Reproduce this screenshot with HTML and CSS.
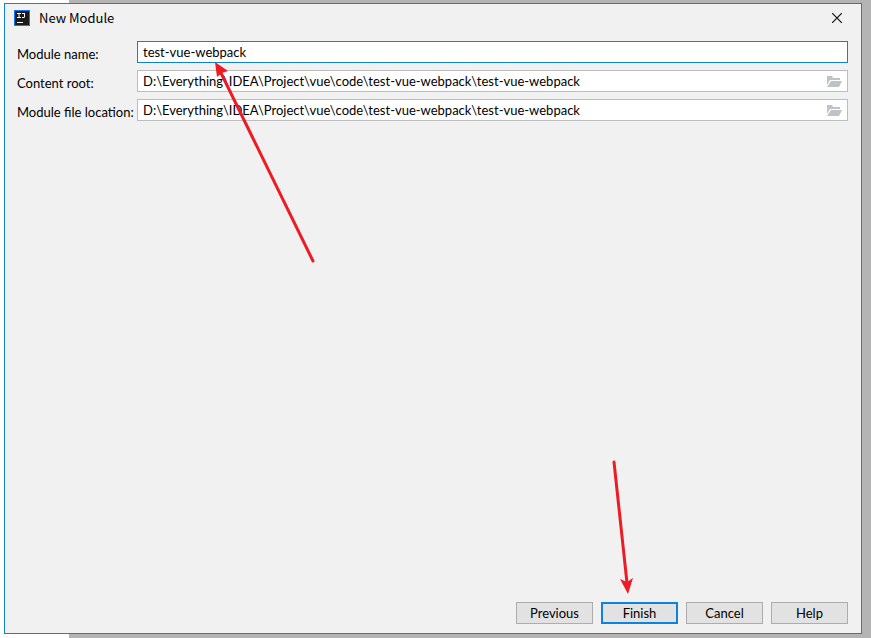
FILE: index.html
```html
<!DOCTYPE html>
<html lang="en">
<head>
    <meta charset="UTF-8">
    <meta name="viewport" content="width=device-width, initial-scale=1.0">
    <title>New Module</title>
    <link rel="stylesheet" href="styles.css">
</head>
<body>
    <form class="dialog">
        <header class="titlebar">
            <svg class="logo" width="16" height="16" viewBox="0 0 16 16" aria-hidden="true">
                <rect width="16" height="16" fill="#087cfa"/>
                <rect x="1" y="1" width="14" height="14" fill="#1b1b1b"/>
                <path d="M3 3.500h4M5 3v5M3 7.500h4M8 3.500h3M10.500 3v4q0 .5-.5.5H8M3 12.500h6" fill="none" stroke="#fff"/>
            </svg>
            <h1>New Module</h1>
            <button type="button" class="close" aria-label="Close">
                <svg width="10" height="10" viewBox="0 0 10 10"><path d="M0 0l10 10M10 0L0 10" stroke="#111" stroke-width="1.2"/></svg>
            </button>
        </header>

        <main class="fields">
            <label for="name">Module name:</label>
            <div class="field active">
                <input id="name" type="text" value="test-vue-webpack">
            </div>

            <label for="root">Content root:</label>
            <div class="field">
                <input id="root" type="text" value="D:\Everything\IDEA\Project\vue\code\test-vue-webpack\test-vue-webpack">
                <button type="button" class="browse" aria-label="Browse content root">
                    <svg width="15" height="11" viewBox="0 0 15 11"><path d="M0 0h5l1 2h7v2H3L0 9z M4 5h11l-3 6H0z" fill="#bfc3c7"/></svg>
                </button>
            </div>

            <label for="location">Module file location:</label>
            <div class="field">
                <input id="location" type="text" value="D:\Everything\IDEA\Project\vue\code\test-vue-webpack\test-vue-webpack">
                <button type="button" class="browse" aria-label="Browse module file location">
                    <svg width="15" height="11" viewBox="0 0 15 11"><path d="M0 0h5l1 2h7v2H3L0 9z M4 5h11l-3 6H0z" fill="#bfc3c7"/></svg>
                </button>
            </div>

            <svg class="arrow arrow-name" width="104" height="204" viewBox="0 0 104 204" aria-hidden="true">
                <path d="M8 12L100 200" stroke="#ed1c24" stroke-width="3" stroke-linecap="round"/>
                <path d="M2 1L15 10L9 12L4 16z" fill="#ed1c24"/>
            </svg>
        </main>

        <footer class="buttons">
            <button type="button">Previous</button>
            <div class="primary">
                <button type="submit">Finish</button>
                <svg class="arrow arrow-finish" width="24" height="136" viewBox="0 0 24 136" aria-hidden="true">
                    <path d="M4 3L17 124" stroke="#ed1c24" stroke-width="3" stroke-linecap="round"/>
                    <path d="M18 135L10 120L17 123L23 119z" fill="#ed1c24"/>
                </svg>
            </div>
            <button type="button">Cancel</button>
            <button type="button">Help</button>
        </footer>
    </form>
</body>
</html>
```

FILE: styles.css
```css
* {
    box-sizing: border-box;
}
body {
    display: flex;
    min-height: 100vh;
    margin: 0;
    padding: 3px 9px 4px 4px;
    background: linear-gradient(to right, #fff 69px, #b4b4b4 69px);
    color: #000;
    font: 13px/18px Lato, "Noto Sans", sans-serif;
}
.dialog {
    display: flex;
    flex: 1;
    flex-direction: column;
    border: 1px solid #1283da;
    background: #f1f1f1;
}
.titlebar {
    display: flex;
    align-items: center;
    height: 28px;
    padding: 0 19px 0 9px;
}
h1 {
    flex: 1;
    margin: 0 0 0 9px;
    font: 13px/18px "Noto Sans CJK SC", "Noto Sans", sans-serif;
}
button,
input {
    color: inherit;
    font: inherit;
}
.close,
.browse {
    display: flex;
    padding: 0;
    border: 0;
    background: none;
}
.browse {
    padding-top: 1px;
}
.fields {
    position: relative;
    display: grid;
    flex: 1;
    grid-template-columns: 120px 1fr;
    align-content: start;
    row-gap: 7px;
    padding: 9px 13px 0 12px;
}
label {
    height: 22px;
    padding-top: 4px;
    white-space: nowrap;
}
.field {
    display: flex;
    align-items: center;
    height: 22px;
    padding: 0 5px;
    border: 1px solid #bdbdbd;
    background: #fff;
}
.field.active {
    border-color: #0f82d8;
}
.field input {
    flex: 1;
    min-width: 0;
    height: 20px;
    padding: 0 0 1px;
    border: 0;
    outline: 0;
    background: none;
}
.buttons {
    display: flex;
    justify-content: flex-end;
    gap: 8px;
    padding: 0 13px 9px;
}
.buttons button {
    width: 77px;
    height: 22px;
    padding: 0;
    border: 1px solid #adadad;
    background: #e2e2e2;
}
.buttons .primary button {
    border: 2px solid #0b84df;
}
.primary {
    position: relative;
    display: flex;
}
.arrow {
    position: absolute;
    fill: none;
    pointer-events: none;
}
.arrow-name {
    top: 29px;
    left: 208px;
}
.arrow-finish {
    bottom: 29px;
    left: 9px;
}
```
